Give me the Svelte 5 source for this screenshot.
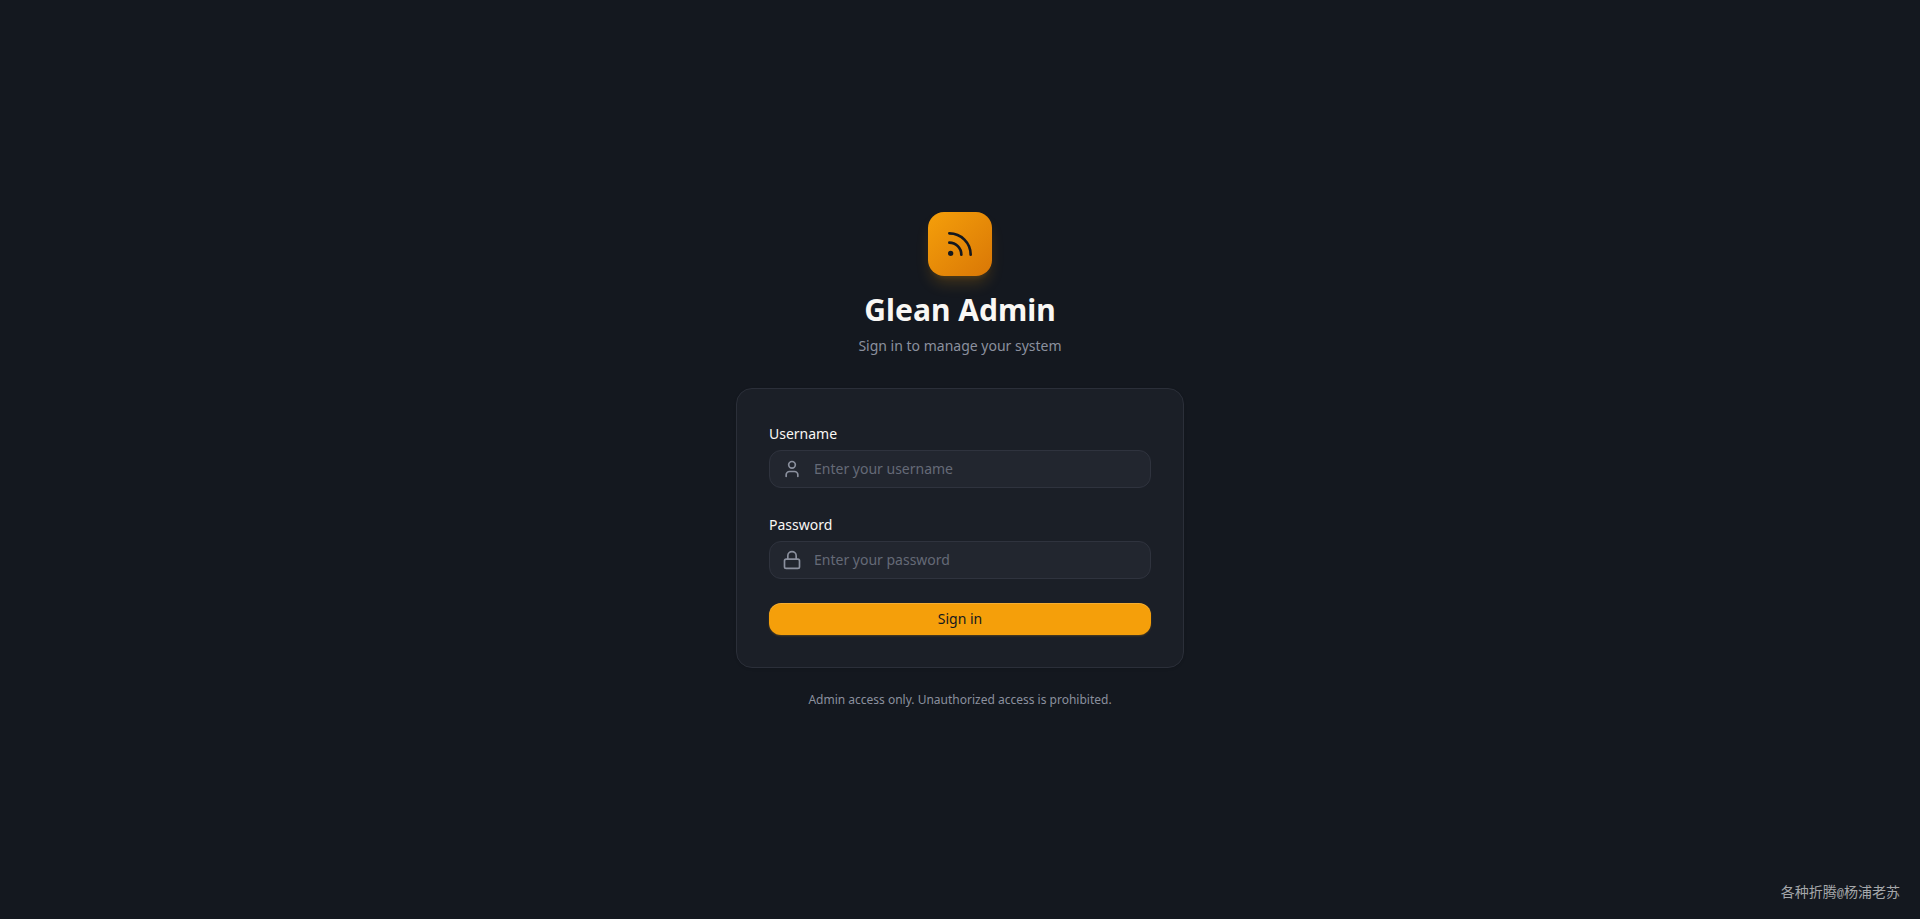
<script>
  let username = $state("");
  let password = $state("");

  const handleSubmit = (event) => {
    event.preventDefault();
  };
</script>

<main class="page">
  <div class="login">
    <header class="header">
      <div class="logo">
        <svg viewBox="0 0 24 24" width="32" height="32" aria-hidden="true">
          <path d="M4 11a9 9 0 0 1 9 9" />
          <path d="M4 4a16 16 0 0 1 16 16" />
          <circle cx="5" cy="19" r="1" />
        </svg>
      </div>
      <h1>Glean Admin</h1>
      <p>Sign in to manage your system</p>
    </header>

    <form class="card" onsubmit={handleSubmit}>
      <div class="field">
        <label for="username">Username</label>
        <div class="control">
          <svg viewBox="0 0 24 24" width="20" height="20" aria-hidden="true">
            <path d="M19 21v-2a4 4 0 0 0-4-4H9a4 4 0 0 0-4 4v2" />
            <circle cx="12" cy="7" r="4" />
          </svg>
          <input
            id="username"
            type="text"
            placeholder="Enter your username"
            autocomplete="username"
            bind:value={username}
          />
        </div>
      </div>

      <div class="field">
        <label for="password">Password</label>
        <div class="control">
          <svg viewBox="0 0 24 24" width="20" height="20" aria-hidden="true">
            <rect x="3" y="11" width="18" height="11" rx="2" />
            <path d="M7 11V7a5 5 0 0 1 10 0v4" />
          </svg>
          <input
            id="password"
            type="password"
            placeholder="Enter your password"
            autocomplete="current-password"
            bind:value={password}
          />
        </div>
      </div>

      <button type="submit">Sign in</button>
    </form>

    <p class="notice">Admin access only. Unauthorized access is prohibited.</p>
  </div>

  <div class="watermark">各种折腾<span>@</span>杨浦老苏</div>
</main>

<style>
  :global(body) {
    margin: 0;
    background: #14181f;
  }

  .page {
    position: relative;
    box-sizing: border-box;
    min-height: 100vh;
    padding: 16px;
    display: flex;
    align-items: center;
    justify-content: center;
    background: #14181f;
    color: #f9f7f4;
    font-family: "Noto Sans", "Open Sans", sans-serif;
    font-size: 14px;
  }

  .login {
    width: 100%;
    max-width: 448px;
  }

  .header {
    display: flex;
    flex-direction: column;
    align-items: center;
    margin-bottom: 32px;
    text-align: center;
  }

  .logo {
    display: flex;
    align-items: center;
    justify-content: center;
    width: 64px;
    height: 64px;
    margin-bottom: 16px;
    border-radius: 16px;
    background: linear-gradient(135deg, #f59f0a, #d97706);
    box-shadow:
      0 10px 15px -3px rgba(245, 159, 10, 0.2),
      0 4px 6px -4px rgba(245, 159, 10, 0.2);
    color: #14181f;
  }

  svg {
    fill: none;
    stroke: currentColor;
    stroke-width: 2;
    stroke-linecap: round;
    stroke-linejoin: round;
  }

  h1 {
    margin: 0;
    font-size: 30px;
    line-height: 36px;
    font-weight: 700;
  }

  p {
    margin: 0;
  }

  .header p {
    margin-top: 8px;
    line-height: 20px;
    color: #8b909e;
  }

  .card {
    padding: 32px;
    display: flex;
    flex-direction: column;
    gap: 24px;
    border: 1px solid #2b2f39;
    border-radius: 16px;
    background: #1b1f27;
    box-shadow: 0 1px 3px rgba(0, 0, 0, 0.1);
  }

  .field {
    display: flex;
    flex-direction: column;
    gap: 4px;
  }

  label {
    line-height: 25px;
  }

  .control {
    box-sizing: border-box;
    height: 38px;
    padding-left: 12px;
    display: flex;
    align-items: center;
    gap: 12px;
    border: 1px solid #2f333e;
    border-radius: 12px;
    background: #22262f;
    color: #8b909e;
  }

  .control:focus-within {
    border-color: #f59f0a;
  }

  .control svg {
    flex: none;
  }

  input {
    flex: 1;
    min-width: 0;
    height: 100%;
    padding: 0 12px 0 0;
    border: 0;
    outline: 0;
    background: transparent;
    color: #f9f7f4;
    font: inherit;
  }

  input::placeholder {
    color: #656a77;
    opacity: 1;
  }

  button {
    height: 32px;
    padding: 0 12px;
    border: 0;
    border-radius: 12px;
    background: #f59f0a;
    box-shadow:
      inset 0 1px rgba(255, 255, 255, 0.16),
      0 1px 2px rgba(245, 159, 10, 0.24);
    color: #14181f;
    font: inherit;
    cursor: pointer;
  }

  .notice {
    margin-top: 24px;
    font-size: 12px;
    line-height: 16px;
    text-align: center;
    color: #8b909e;
  }

  .watermark {
    position: absolute;
    right: 20px;
    bottom: 15px;
    font-family: "Noto Sans CJK SC", sans-serif;
    font-size: 14px;
    line-height: 20px;
    color: #a5a7aa;
  }

  .watermark span {
    font-family: "Liberation Mono", monospace;
    font-size: 12px;
  }
</style>
